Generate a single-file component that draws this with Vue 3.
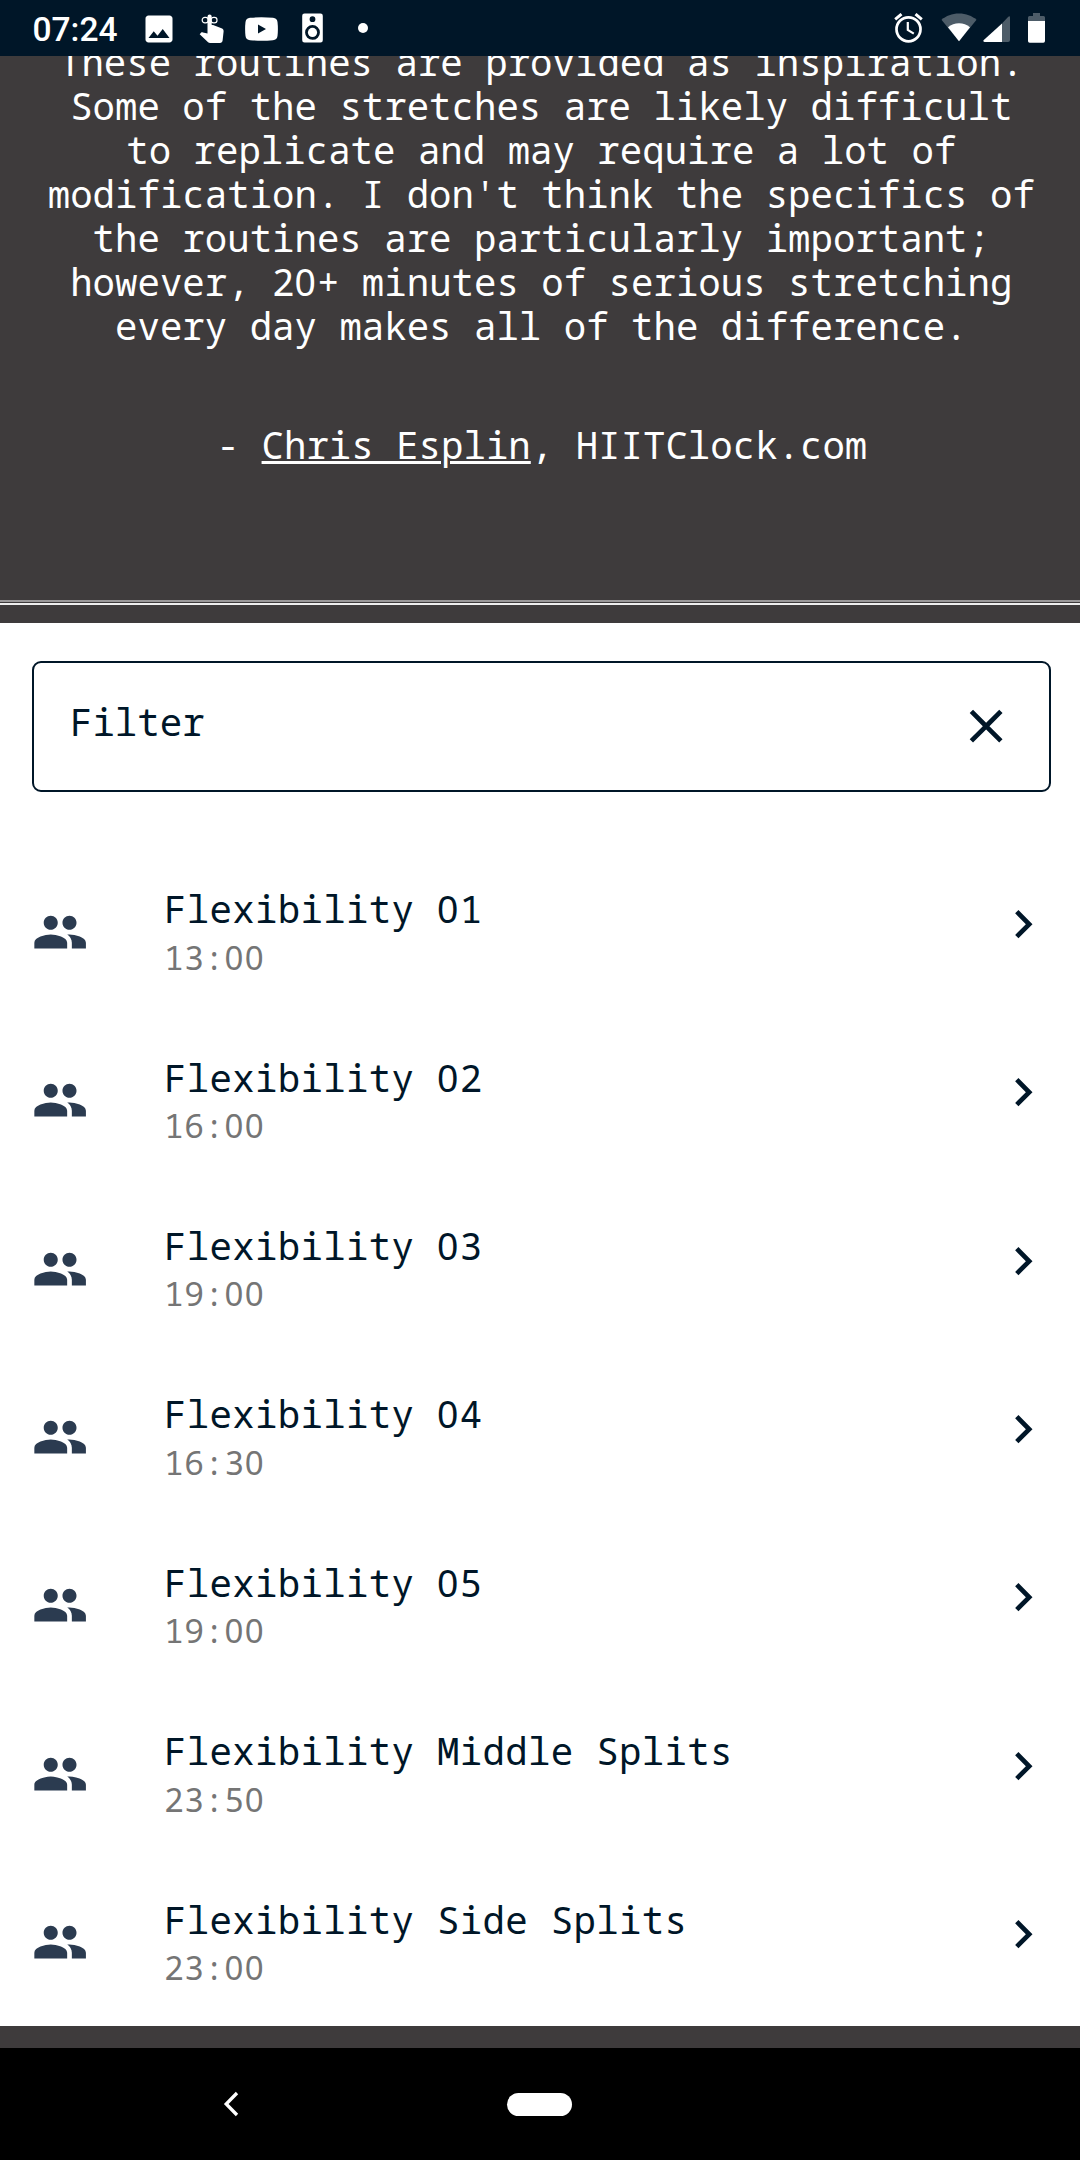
<script setup>
const intro = [
  'These routines are provided as inspiration.',
  'Some of the stretches are likely difficult',
  'to replicate and may require a lot of',
  "modification. I don't think the specifics of",
  'the routines are particularly important;',
  'however, 20+ minutes of serious stretching',
  'every day makes all of the difference.',
]
const routines = [
  { name: 'Flexibility 01', time: '13:00' },
  { name: 'Flexibility 02', time: '16:00' },
  { name: 'Flexibility 03', time: '19:00' },
  { name: 'Flexibility 04', time: '16:30' },
  { name: 'Flexibility 05', time: '19:00' },
  { name: 'Flexibility Middle Splits', time: '23:50' },
  { name: 'Flexibility Side Splits', time: '23:00' },
]

// Splits out zeros so they can be set without the slash of the mono face.
const runs = (text) => text.split(/(0)/).filter((part) => part !== '')
</script>

<template>
  <div class="screen">
    <header class="status">
      <span class="clock">07:24</span>
      <svg class="s-image" width="36" height="36" viewBox="0 0 24 24"><path d="M21 19V5c0-1.100-.9-2-2-2H5c-1.100 0-2 .9-2 2v14c0 1.100.9 2 2 2h14c1.100 0 2-.9 2-2zM8.500 13.500l2.500 3.010L14.500 12l4.500 6H5l3.500-4.500z" /></svg>
      <svg class="s-touch" width="26" height="30" viewBox="0 0 26 30">
        <path d="M8.500 2.500a2.100 2.100 0 0 1 4.200 0V11h1.400l8.400 3.300c1.600.6 2.300 1.700 2.100 3.300l-1 9c-.2 1.600-1.100 2.400-2.600 2.400H11.200c-1 0-1.700-.4-2.400-1.100L.7 20.200l1.300-1.400c.5-.5 1.100-.6 1.900-.4l4.600 1.200z" />
        <g fill="none" stroke="#fff" stroke-width="1.200"><rect x="3.200" y="3.300" width="6" height="5.600" rx="2.600" /><rect x="12" y="3.300" width="6" height="5.600" rx="2.600" /></g>
      </svg>
      <svg class="s-tube" width="33" height="24" viewBox="0 0 33 24"><path fill-rule="evenodd" d="M5 .8Q16.500-.3 28 .8Q32 1.200 32.500 5Q33.300 12 32.500 19Q32 22.800 28 23.200Q16.500 24.300 5 23.200Q1 22.800.5 19Q-.3 12 .5 5Q1 1.200 5 .8zM13 7.500v9l8-4.500z" /></svg>
      <svg class="s-speaker" width="21" height="30" viewBox="0 0 21 30"><path fill-rule="evenodd" d="M2.500.5h16a2.300 2.300 0 0 1 2.300 2.300v24.400a2.300 2.300 0 0 1-2.300 2.300h-16a2.300 2.300 0 0 1-2.300-2.300V2.800A2.300 2.300 0 0 1 2.500.5zM10.500 3.300a2.900 2.900 0 1 0 0 5.800 2.900 2.900 0 0 0 0-5.800zM10.500 12a7.400 7.400 0 1 0 0 14.800 7.400 7.400 0 0 0 0-14.800z" /><circle cx="10.500" cy="19.400" r="4.600" /></svg>
      <span class="dot"></span>
      <span class="grow"></span>
      <svg class="s-alarm" width="29" height="30" viewBox="0 0 29 30" fill="none" stroke="#fff"><circle cx="14.500" cy="16.300" r="12" stroke-width="2.700" /><path d="M1.200 6.300l6.300-5.200M27.800 6.300l-6.300-5.200" stroke-width="3" /><path d="M13.800 9v8l6 3.600" stroke-width="2.200" /></svg>
      <svg class="s-wifi" width="36" height="30" viewBox="0 0 36 30"><path opacity=".3" d="M18 28.300L.5 6.700C5 3 11 .5 18 .5s13 2.500 17.500 6.200z" /><path d="M18 28.300L7 14.300c3-2.500 7-4 11-4s8 1.500 11 4z" /></svg>
      <svg class="s-cell" width="28" height="28" viewBox="0 0 28 28"><path opacity=".3" d="M19 8.500L25.300 1.700q1.700-1.300 1.700.5V25q0 2-2 2h-6z" /><path d="M19 8.500V27H1.500q-2-.4-.7-2z" /></svg>
      <svg class="s-battery" width="17" height="30" viewBox="0 0 17 30"><path opacity=".3" d="M0 8V4.500Q0 3 1.500 3H5V0h7v3h3.500Q17 3 17 4.500V8z" /><path d="M0 8h17v20q0 1.700-1.700 1.700H1.700Q0 29.700 0 28z" /></svg>
    </header>

    <section class="hero">
      <p class="intro">
        <span v-for="line in intro" :key="line" class="line"><span v-for="(part, i) in runs(line)" :key="i" :class="{ zero: part === '0' }">{{ part }}</span></span>
      </p>
      <p class="author">- <a class="link">Chris Esplin</a>, HIITClock.com</p>
      <div class="rule"></div>
    </section>

    <main class="panel">
      <div class="filter">
        <span class="label">Filter</span>
        <svg class="close" viewBox="0 0 24 24"><path d="M19 6.410L17.590 5 12 10.590 6.410 5 5 6.410 10.590 12 5 17.590 6.410 19 12 13.410 17.590 19 19 17.590 13.410 12z" /></svg>
      </div>
      <ul class="list">
        <li v-for="r in routines" :key="r.name" class="row">
          <svg class="people" viewBox="0 0 24 24"><path d="M16 11c1.660 0 2.990-1.340 2.990-3S17.660 5 16 5c-1.660 0-3 1.340-3 3s1.340 3 3 3zm-8 0c1.660 0 2.990-1.340 2.990-3S9.660 5 8 5C6.340 5 5 6.340 5 8s1.340 3 3 3zm0 2c-2.330 0-7 1.170-7 3.500V19h14v-2.500c0-2.330-4.670-3.500-7-3.500zm8 0c-.29 0-.62.020-.97.050 1.160.84 1.970 1.970 1.970 3.450V19h6v-2.500c0-2.330-4.670-3.500-7-3.500z" /></svg>
          <div class="texts">
            <span class="name"><span v-for="(part, i) in runs(r.name)" :key="i" :class="{ zero: part === '0' }">{{ part }}</span></span>
            <span class="time"><span v-for="(part, i) in runs(r.time)" :key="i" :class="{ zero: part === '0' }">{{ part }}</span></span>
          </div>
          <svg class="chevron" viewBox="0 0 24 24"><path d="M10 6L8.590 7.410 13.170 12l-4.580 4.590L10 18l6-6z" /></svg>
        </li>
      </ul>
    </main>

    <footer class="nav">
      <svg class="back" width="16" height="26" viewBox="0 0 16 26"><path d="M14 2L3.200 13 14 24" fill="none" stroke="#fff" stroke-width="3.300" /></svg>
      <span class="home"></span>
    </footer>
  </div>
</template>

<style>
body {
  margin: 0;
}
</style>

<style scoped>
.screen {
  width: 1080px;
  height: 2160px;
  display: flex;
  flex-direction: column;
  overflow: hidden;
  background: #3e3b3c;
  color: #001628;
  font-family: "Noto Sans Mono", "DejaVu Sans Mono", monospace;
  font-size: 37.400px;
  --track: 0px;
  letter-spacing: var(--track);
}
.zero {
  font-family: "Noto Sans", sans-serif;
  letter-spacing: calc(0.028em + var(--track));
}
.status {
  flex: none;
  height: 56px;
  display: flex;
  align-items: flex-start;
  background: #001628;
  fill: #fff;
}
.status svg {
  flex: none;
}
.clock {
  width: 108.500px;
  padding: 9.500px 0 0 32.500px;
  font: 500 33.500px/40px Roboto, sans-serif;
  color: #fff;
}
.s-image { margin: 10.500px 0 0 0; }
.s-touch { margin: 13.500px 0 0 22px; }
.s-tube { margin: 16.500px 0 0 19.500px; }
.s-speaker { margin: 13.300px 0 0 24px; }
.dot {
  width: 10px;
  height: 10px;
  margin: 23px 0 0 35px;
  border-radius: 50%;
  background: #fff;
}
.grow { flex: 1; }
.s-alarm { margin: 13px 17.500px 0 0; }
.s-wifi { margin: 13px 6px 0 0; }
.s-cell { margin: 15px 17.500px 0 0; }
.s-battery { margin: 13px 35px 0 0; }
.hero {
  flex: none;
  height: 567px;
  overflow: hidden;
  display: flex;
  flex-direction: column;
  color: #fff;
  text-align: center;
  line-height: 44px;
}
.intro {
  margin: -16px 0 0;
  padding-left: 2.600px;
}
.line {
  display: block;
  height: 44px;
  white-space: pre;
}
.author {
  margin: 75px 0 0;
  padding-left: 4px;
}
.link {
  text-decoration: underline;
  text-decoration-thickness: 3px;
}
.rule {
  height: 1px;
  margin: auto 0 18px;
  border-top: 2px solid #9b999a;
  border-bottom: 2px solid #efefef;
}
.panel {
  flex: none;
  height: 1403px;
  box-sizing: border-box;
  padding-top: 38px;
  background: #fff;
}
.filter {
  box-sizing: border-box;
  width: 1019px;
  height: 131px;
  margin-left: 32px;
  padding: 0 35px 0 36px;
  border: 2px solid #001628;
  border-radius: 9px;
  display: flex;
  align-items: center;
  justify-content: space-between;
}
.label {
  line-height: 56px;
  margin-bottom: 10px;
}
.close {
  width: 56.250px;
  height: 56.250px;
  fill: #001628;
}
.list {
  list-style: none;
  margin: 55.200px 0 0;
  padding: 0;
}
.row {
  height: 168.400px;
  display: flex;
  align-items: flex-start;
}
.people {
  width: 56.250px;
  height: 56.250px;
  margin: 56.700px 76px 0 31.700px;
  fill: #2b3b50;
}
.texts {
  flex: 1;
  display: flex;
  flex-direction: column;
  padding-top: 34px;
}
.name {
  --track: 0.320px;
  height: 56px;
  line-height: 56px;
  letter-spacing: var(--track);
}
.time {
  --track: 0.400px;
  margin-top: -1.500px;
  font-size: 33px;
  line-height: 44px;
  letter-spacing: var(--track);
  color: #757575;
}
.chevron {
  width: 56.250px;
  height: 56.250px;
  margin: 48.700px 29px 0 0;
  fill: #001628;
}
.nav {
  flex: none;
  height: 112px;
  margin-top: 22px;
  display: flex;
  align-items: center;
  background: #000;
}
.back {
  margin-left: 223px;
}
.home {
  width: 65px;
  height: 23px;
  margin-left: 268px;
  border-radius: 11.500px;
  background: #fff;
}
</style>
